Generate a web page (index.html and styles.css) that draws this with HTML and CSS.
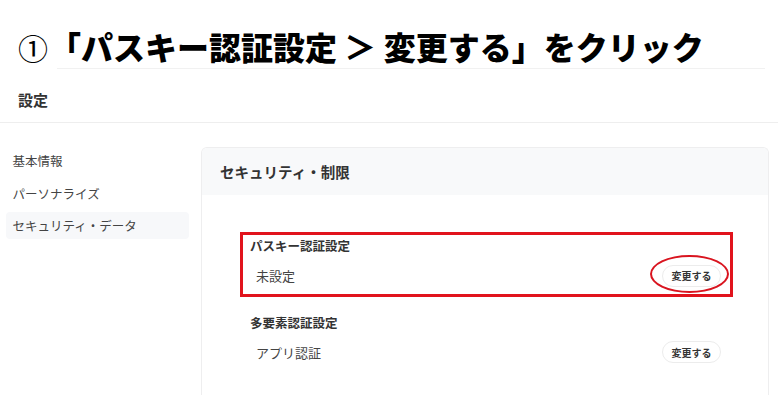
FILE: index.html
```html
<!DOCTYPE html>
<html lang="ja">
<head>
<meta charset="utf-8">
<link rel="stylesheet" href="styles.css">
</head>
<body>
<div class="caption"><span class="num">①</span><span class="ctext">「パスキー認証設定 ＞ 変更する」をクリック</span></div>
<div class="rule"></div>
<div class="page-head">設定</div>
<div class="main">
  <nav class="side">
    <div class="side-item">基本情報</div>
    <div class="side-item">パーソナライズ</div>
    <div class="side-item active">セキュリティ・データ</div>
  </nav>
  <section class="card">
    <div class="card-head">セキュリティ・制限</div>
    <div class="card-body">
      <div class="setting first">
        <div class="mark-box"></div>
        <div class="setting-title">パスキー認証設定</div>
        <div class="setting-row">
          <span class="setting-value">未設定</span>
          <span class="btn-wrap"><button class="btn">変更する</button><span class="mark-ring"></span></span>
        </div>
      </div>
      <div class="setting">
        <div class="setting-title">多要素認証設定</div>
        <div class="setting-row">
          <span class="setting-value">アプリ認証</span>
          <span class="btn-wrap"><button class="btn">変更する</button></span>
        </div>
      </div>
    </div>
  </section>
</div>
</body>
</html>
```
FILE: styles.css
```css
* { box-sizing: border-box; }
html, body { margin: 0; padding: 0; background: #fff; }
html { height: 395px; overflow: hidden; }
body {
  width: 778px;
  height: 395px;
  overflow: hidden;
  font-family: "Noto Sans CJK JP", "Noto Sans", sans-serif;
  color: #333;
}
.caption {
  height: 68px;
  padding: 24px 0 0 18px;
  line-height: 44px;
  font-size: 32px;
  font-weight: 900;
  color: #000;
  white-space: nowrap;
}
.caption .num { font-weight: 400; font-size: 30px; margin-right: 1px; }
.rule {
  height: 1px;
  margin: 0 13px 0 57px;
  background: #f1f1f1;
}
.page-head {
  height: 54px;
  padding: 7px 0 0 18px;
  display: flex;
  align-items: center;
  font-size: 15px;
  font-weight: 700;
  color: #333;
  border-bottom: 1px solid #eeeeee;
}
.main {
  display: flex;
  padding: 24px 9px 0 6px;
  gap: 12px;
}
.side {
  width: 183px;
  flex: none;
  display: flex;
  flex-direction: column;
  gap: 5.5px;
}
.side-item {
  height: 27px;
  line-height: 27px;
  padding-left: 6.5px;
  font-size: 12.5px;
  color: #444;
  border-radius: 4px;
}
.side-item.active { background: #f7f8fa; }
.card {
  flex: 1;
  height: 249px;
  border: 1px solid #eeeeef;
  border-bottom: none;
  border-radius: 6px 6px 0 0;
  overflow: hidden;
}
.card-head {
  height: 47px;
  background: #f8f9fa;
  padding-left: 18px;
  display: flex;
  align-items: center;
  font-size: 14.5px;
  font-weight: 700;
  color: #333;
}
.card-body {
  padding: 42px 47px 0 48px;
  display: flex;
  flex-direction: column;
  gap: 27px;
}
.setting { position: relative; }
.setting-title {
  height: 18px;
  line-height: 18px;
  font-size: 12.5px;
  font-weight: 700;
  color: #333;
}
.setting-row {
  margin-top: 9.5px;
  height: 22px;
  display: flex;
  align-items: center;
  justify-content: space-between;
}
.setting-value {
  padding-left: 6px;
  font-size: 13px;
  color: #444;
}
.btn-wrap { position: relative; display: block; }
.btn {
  display: block;
  width: 59px;
  height: 22px;
  padding: 0;
  border: 1px solid #ececec;
  border-radius: 11px;
  background: #fff;
  font-family: inherit;
  font-size: 10px;
  font-weight: 700;
  color: #333;
}
.mark-box {
  position: absolute;
  top: -5px;
  left: -10px;
  right: -12px;
  bottom: -10px;
  border: 3px solid #e1131c;
  pointer-events: none;
}
.mark-ring {
  position: absolute;
  left: -12px;
  top: -10px;
  width: 79px;
  height: 38px;
  border: 2.5px solid #d9141f;
  border-radius: 50%;
  pointer-events: none;
}
```
